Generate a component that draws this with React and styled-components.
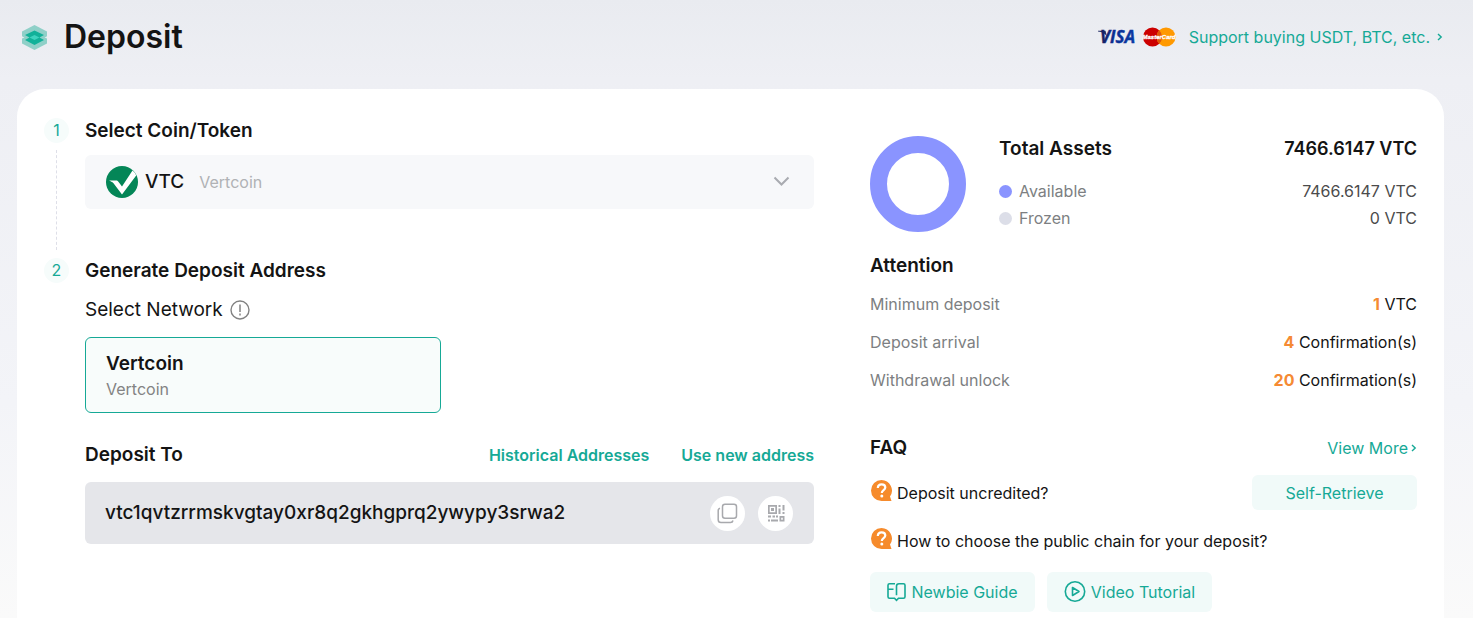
import React, { useState } from "react";
import styled, { createGlobalStyle } from "styled-components";

const GREEN = "#16a996";

const GlobalStyle = createGlobalStyle`
  * {
    box-sizing: border-box;
  }
  body {
    margin: 0;
    color: #141414;
    font-family: Inter, "Liberation Sans", sans-serif;
    font-size: 16px;
    line-height: 24px;
  }
  h1, h2, p, dl, dt, dd {
    margin: 0;
  }
  button, select {
    font: inherit;
    color: inherit;
    border: 0;
    padding: 0;
    background: none;
    cursor: pointer;
  }
  svg {
    display: block;
    flex: none;
  }
`;

const Page = styled.div`
  display: flex;
  flex-direction: column;
  min-height: 100vh;
  padding: 0 29px 0 17px;
  background: linear-gradient(#e9ebf0 0, #eeeff4 80px, #f3f4f8 65%, #fafafa 100%);
`;

const Header = styled.header`
  display: flex;
  align-items: center;
  justify-content: space-between;
  height: 89px;
  padding: 0 1px 15px 4px;
`;

const Brand = styled.div`
  display: flex;
  align-items: center;
  gap: 16px;
  h1 {
    font-size: 32px;
    font-weight: 600;
    line-height: 42px;
  }
`;

const BuyLink = styled.a`
  display: flex;
  align-items: center;
  color: ${GREEN};
  text-decoration: none;
  .cards {
    margin-right: 13px;
    overflow: visible;
  }
  .arrow {
    margin-left: 7px;
  }
`;

const Card = styled.main`
  flex: 1;
  display: grid;
  grid-template-columns: 770fr 547fr;
  gap: 56px;
  padding: 29px 27px 6px;
  background: #fff;
  border-radius: 28px 28px 0 0;
`;

const Step = styled.section`
  display: flex;
  gap: 16px;
`;

const Marker = styled.div`
  display: flex;
  flex-direction: column;
  align-items: center;
  span {
    width: 25px;
    height: 25px;
    border-radius: 50%;
    background: #f6fcfb;
    color: ${GREEN};
    line-height: 25px;
    text-align: center;
  }
  i {
    flex: 1;
    margin: 7px 0 8px;
    border-left: 1px dashed #dedfe8;
  }
`;

const StepBody = styled.div`
  flex: 1;
  min-width: 0;
  padding-bottom: ${(props) => (props.$last ? "0" : "49px")};
`;

const Title = styled.h2`
  font-size: 19px;
  font-weight: 600;
  line-height: 26px;
`;

const CoinSelect = styled.label`
  display: flex;
  align-items: center;
  height: 54px;
  margin-top: 11px;
  padding: 0 24px 0 21px;
  border-radius: 6px;
  background: #f7f8fa;
  select {
    margin: 0 15px 0 7px;
    appearance: none;
    field-sizing: content;
    font-size: 19px;
    font-weight: 500;
  }
  span {
    flex: 1;
    color: #b0b2b5;
  }
`;

const NetworkLabel = styled.div`
  display: flex;
  align-items: center;
  gap: 7px;
  margin: 13px 0 14px;
  font-size: 19px;
  line-height: 26px;
`;

const NetworkOption = styled.label`
  display: block;
  max-width: 356px;
  padding: 12px 20px 11px;
  border: 1px solid ${GREEN};
  border-radius: 6px;
  background: #f8fcfb;
  cursor: pointer;
  input {
    position: absolute;
    opacity: 0;
  }
  strong {
    display: block;
    font-size: 19px;
    font-weight: 600;
    line-height: 27px;
  }
  small {
    display: block;
    color: #838383;
    font-size: 16px;
    line-height: 24px;
  }
`;

const AddressHead = styled.div`
  display: flex;
  align-items: center;
  gap: 32px;
  margin: 29px 0 14px;
  h2 {
    flex: 1;
  }
  button {
    color: ${GREEN};
    font-weight: 600;
    line-height: 26px;
  }
`;

const AddressBox = styled.div`
  display: flex;
  align-items: center;
  gap: 13px;
  height: 62px;
  padding: 0 21px 0 20px;
  border-radius: 6px;
  background: #e5e6ea;
  p {
    flex: 1;
    font-size: 19px;
    font-weight: 500;
  }
`;

const RoundButton = styled.button`
  display: flex;
  align-items: center;
  justify-content: center;
  width: 35px;
  height: 35px;
  border-radius: 50%;
  background: #fff;
`;

const Side = styled.aside`
  padding-top: 18px;
`;

const Assets = styled.section`
  display: flex;
  gap: 33px;
  margin-bottom: 21px;
  dl {
    flex: 1;
  }
`;

const AssetRow = styled.div`
  display: flex;
  align-items: center;
  justify-content: space-between;
  line-height: 27px;
  color: #4b4b4b;
  dt {
    display: flex;
    align-items: center;
    gap: 7px;
    color: #7d7f82;
  }
  dt::before {
    content: "";
    width: 13px;
    height: 13px;
    border-radius: 50%;
    background: ${(props) => props.$dot};
  }
`;

const TotalRow = styled.div`
  display: flex;
  justify-content: space-between;
  margin-bottom: 16px;
  font-size: 19px;
  font-weight: 600;
  line-height: 26px;
  dd {
    font-size: 18px;
  }
`;

const RuleList = styled.dl`
  margin: 6px 0 36px;
  div {
    display: flex;
    justify-content: space-between;
    line-height: 38px;
  }
  dt {
    color: #7d7f82;
  }
  b {
    color: #f58a33;
    font-weight: 700;
  }
`;

const FaqHead = styled.div`
  display: flex;
  align-items: center;
  justify-content: space-between;
  margin-bottom: 14px;
  a {
    display: flex;
    align-items: center;
    gap: 3px;
    color: ${GREEN};
    text-decoration: none;
    line-height: 24px;
  }
`;

const FaqRow = styled.div`
  display: flex;
  align-items: center;
  justify-content: space-between;
  margin-bottom: 18px;
`;

const Question = styled.p`
  display: flex;
  gap: 5px;
  line-height: 26px;
`;

const SoftButton = styled.button`
  display: flex;
  align-items: center;
  justify-content: center;
  gap: 5px;
  width: 165px;
  height: ${(props) => props.$height || 40}px;
  border-radius: 6px;
  background: #f1faf9;
  color: ${GREEN};
`;

const Guides = styled.div`
  display: flex;
  gap: 12px;
`;

const LayersIcon = () => (
  <svg width="27" height="27" viewBox="0 0 27 27">
    <path d="M13.500 7 26 13.800v5.700L13.500 26 1 19.500v-5.700z" fill="#8fd0c8" />
    <path d="M13.500 1 26 7.500v5L13.500 19 1 12.500v-5z" fill="#8fd0c8" />
    <path d="M1 12.500l2.500 1L1 14.500zM26 12.500l-2.500 1 2.500 1z" fill="#e4efef" />
    <path d="M13.500 6.500 23 11l-4.500 2.500L23 16l-9.500 5L4 16l4.500-2.500L4 11z" fill="#12b199" />
    <path d="m13.500 11 5 2.500-5 2.500-5-2.500z" fill="#3fd3be" />
  </svg>
);

const PayCards = () => (
  <svg className="cards" width="78" height="20" viewBox="0 0 78 20">
    <defs>
      <linearGradient id="visa" x1="0" x2="1">
        <stop offset="0" stopColor="#1b1e5a" />
        <stop offset="0.4" stopColor="#0a2f94" />
        <stop offset="1" stopColor="#0a3aa5" />
      </linearGradient>
    </defs>
    <path d="M0 3.800h7.500l1.500 6C7.500 6.500 4 4.800 0 4.400z" fill="#242d66" />
    <text x="2" y="16" fontFamily="Open Sans" fontSize="17" fontWeight="700" fontStyle="italic" fill="url(#visa)" stroke="url(#visa)" strokeWidth="0.400">VISA</text>
    <circle cx="54.500" cy="10" r="9.500" fill="#cc0000" />
    <circle cx="68" cy="10" r="9.500" fill="#ff9900" />
    <path d="M61.250 3.310a9.500 9.500 0 0 1 0 13.380 9.500 9.500 0 0 1 0-13.380z" fill="#e0560a" />
    <text x="61" y="12" textAnchor="middle" fontFamily="Liberation Sans" fontSize="6" fontWeight="700" fontStyle="italic" fill="#fff" stroke="#fff" strokeWidth="0.300">MasterCard</text>
  </svg>
);

const ChevronRight = (props) => (
  <svg width="6" height="8" viewBox="0 0 6 8" {...props}>
    <path d="m1 1 3.200 3L1 7" fill="none" stroke={GREEN} strokeWidth="1.400" />
  </svg>
);

const VtcIcon = () => (
  <svg width="32" height="32" viewBox="0 0 32 32">
    <circle cx="16" cy="16" r="16" fill="#048657" />
    <path d="M3 14.500h7c1.200 0 1.800.4 2.400 1.200l3.600 4.800L26.500 4.500q2.500 1.800 3.700 5L16 28.500 7.500 17.300C6.300 15.800 4.500 15.300 3 14.500z" fill="#fff" />
  </svg>
);

const ChevronDown = () => (
  <svg width="17" height="12" viewBox="0 0 17 12">
    <path d="m1.500 1.500 7 7 7-7" fill="none" stroke="#a9abb0" strokeWidth="2" />
  </svg>
);

const InfoIcon = () => (
  <svg width="20" height="20" viewBox="0 0 20 20">
    <circle cx="10" cy="10" r="9" fill="none" stroke="#828282" strokeWidth="1.400" />
    <path d="M10 4.500v7.500M10 13.500v2" stroke="#828282" strokeWidth="1.500" />
  </svg>
);

const CopyIcon = () => (
  <svg width="21" height="21" viewBox="0 0 21 21" fill="none" stroke="#a8a9ad" strokeWidth="1.500">
    <rect x="5.500" y="1.200" width="14" height="14" rx="2.500" />
    <path d="M3 5.200c-1.200.3-1.800 1.100-1.800 2.300v9.200c0 1.800 1 2.800 2.800 2.800h9.500c1.300 0 2.200-.7 2.500-2" />
  </svg>
);

const QrIcon = () => (
  <svg width="18" height="18" viewBox="0 0 18 18" fill="#a8a9ad">
    <path fillRule="evenodd" d="M1 1h9v9H1zM2.700 2.700v5.600h5.600V2.700z" />
    <path d="M4 4h3v3H4zM11.500 1h2v2h-2zM11.500 4.500h2V10h-2zM15.500 1h2v5.500h-2zM15.500 8h2v2h-2zM1 11.500h3v2H1zM5.500 11.500h2.500v2H5.500zM9 11.500h2v2H9zM1 15.500h2v2H1zM4 15.500h7v2H4z" />
    <path fillRule="evenodd" d="M12.500 12h5v5.500h-5zM14.200 13.700v2h1.600v-2z" />
  </svg>
);

const HelpIcon = () => (
  <svg width="22" height="22" viewBox="0 0 22 22">
    <path d="M11.500 0a10.500 10.500 0 0 1 8.500 16.500L21.500 21h-10a10.500 10.500 0 0 1 0-21z" fill="#f68b2c" />
    <path d="M7.800 8c.1-2.200 1.600-3.600 3.800-3.600s3.700 1.300 3.700 3.200c0 2.600-3.500 2.600-3.500 5.400" fill="none" stroke="#fff" strokeWidth="2.200" />
    <circle cx="11.800" cy="16" r="1.500" fill="#fff" />
  </svg>
);

const BookIcon = () => (
  <svg width="19" height="20" viewBox="0 0 19 20" fill="none" stroke={GREEN} strokeWidth="1.600">
    <path d="M8 1.800H2.500Q1 1.800 1 3.300v11.400q0 1.500 1.500 1.500h5l2 2.200 2-2.200h5q1.500 0 1.500-1.500V3.300q0-1.500-1.500-1.500H12Q9.500 1.800 9.500 4.300v9M1.500 7.300H6.500" />
  </svg>
);

const PlayIcon = () => (
  <svg width="22" height="22" viewBox="0 0 22 22" fill="none" stroke={GREEN} strokeWidth="1.600">
    <circle cx="11" cy="10.500" r="9.700" />
    <path d="M8.500 6.500v8l6.500-4z" strokeLinejoin="round" />
  </svg>
);

const rules = [
  { label: "Minimum deposit", value: 1, unit: "VTC" },
  { label: "Deposit arrival", value: 4, unit: "Confirmation(s)" },
  { label: "Withdrawal unlock", value: 20, unit: "Confirmation(s)" },
];

export default function App() {
  const [network, setNetwork] = useState("vertcoin");
  const address = "vtc1qvtzrrmskvgtay0xr8q2gkhgprq2ywypy3srwa2";

  return (
    <>
      <GlobalStyle />
      <Page>
        <Header>
          <Brand>
            <LayersIcon />
            <h1>Deposit</h1>
          </Brand>
          <BuyLink href="#buy">
            <PayCards />
            Support buying USDT, BTC, etc.
            <ChevronRight className="arrow" />
          </BuyLink>
        </Header>

        <Card>
          <div>
            <Step>
              <Marker>
                <span>1</span>
                <i />
              </Marker>
              <StepBody>
                <Title>Select Coin/Token</Title>
                <CoinSelect>
                  <VtcIcon />
                  <select aria-label="Coin">
                    <option>VTC</option>
                  </select>
                  <span>Vertcoin</span>
                  <ChevronDown />
                </CoinSelect>
              </StepBody>
            </Step>

            <Step>
              <Marker>
                <span>2</span>
              </Marker>
              <StepBody $last>
                <Title>Generate Deposit Address</Title>
                <NetworkLabel>
                  Select Network
                  <InfoIcon />
                </NetworkLabel>
                <NetworkOption>
                  <input
                    type="radio"
                    name="network"
                    value="vertcoin"
                    checked={network === "vertcoin"}
                    onChange={(e) => setNetwork(e.target.value)}
                  />
                  <strong>Vertcoin</strong>
                  <small>Vertcoin</small>
                </NetworkOption>

                <AddressHead>
                  <Title>Deposit To</Title>
                  <button type="button">Historical Addresses</button>
                  <button type="button">Use new address</button>
                </AddressHead>
                <AddressBox>
                  <p>{address}</p>
                  <RoundButton type="button" aria-label="Copy address">
                    <CopyIcon />
                  </RoundButton>
                  <RoundButton type="button" aria-label="Show QR code">
                    <QrIcon />
                  </RoundButton>
                </AddressBox>
              </StepBody>
            </Step>
          </div>

          <Side>
            <Assets>
              <svg width="96" height="96" viewBox="0 0 96 96">
                <circle cx="48" cy="48" r="39.500" fill="none" stroke="#8a94ff" strokeWidth="17" />
              </svg>
              <dl>
                <TotalRow>
                  <dt>Total Assets</dt>
                  <dd>7466.6147 VTC</dd>
                </TotalRow>
                <AssetRow $dot="#8a94ff">
                  <dt>Available</dt>
                  <dd>7466.6147 VTC</dd>
                </AssetRow>
                <AssetRow $dot="#dcdee8">
                  <dt>Frozen</dt>
                  <dd>0 VTC</dd>
                </AssetRow>
              </dl>
            </Assets>

            <Title>Attention</Title>
            <RuleList>
              {rules.map((rule) => (
                <div key={rule.label}>
                  <dt>{rule.label}</dt>
                  <dd>
                    <b>{rule.value}</b> {rule.unit}
                  </dd>
                </div>
              ))}
            </RuleList>

            <FaqHead>
              <Title>FAQ</Title>
              <a href="#faq">
                View More
                <ChevronRight />
              </a>
            </FaqHead>
            <FaqRow>
              <Question>
                <HelpIcon />
                Deposit uncredited?
              </Question>
              <SoftButton type="button" $height={35}>Self-Retrieve</SoftButton>
            </FaqRow>
            <FaqRow>
              <Question>
                <HelpIcon />
                How to choose the public chain for your deposit?
              </Question>
            </FaqRow>
            <Guides>
              <SoftButton type="button">
                <BookIcon />
                Newbie Guide
              </SoftButton>
              <SoftButton type="button">
                <PlayIcon />
                Video Tutorial
              </SoftButton>
            </Guides>
          </Side>
        </Card>
      </Page>
    </>
  );
}
